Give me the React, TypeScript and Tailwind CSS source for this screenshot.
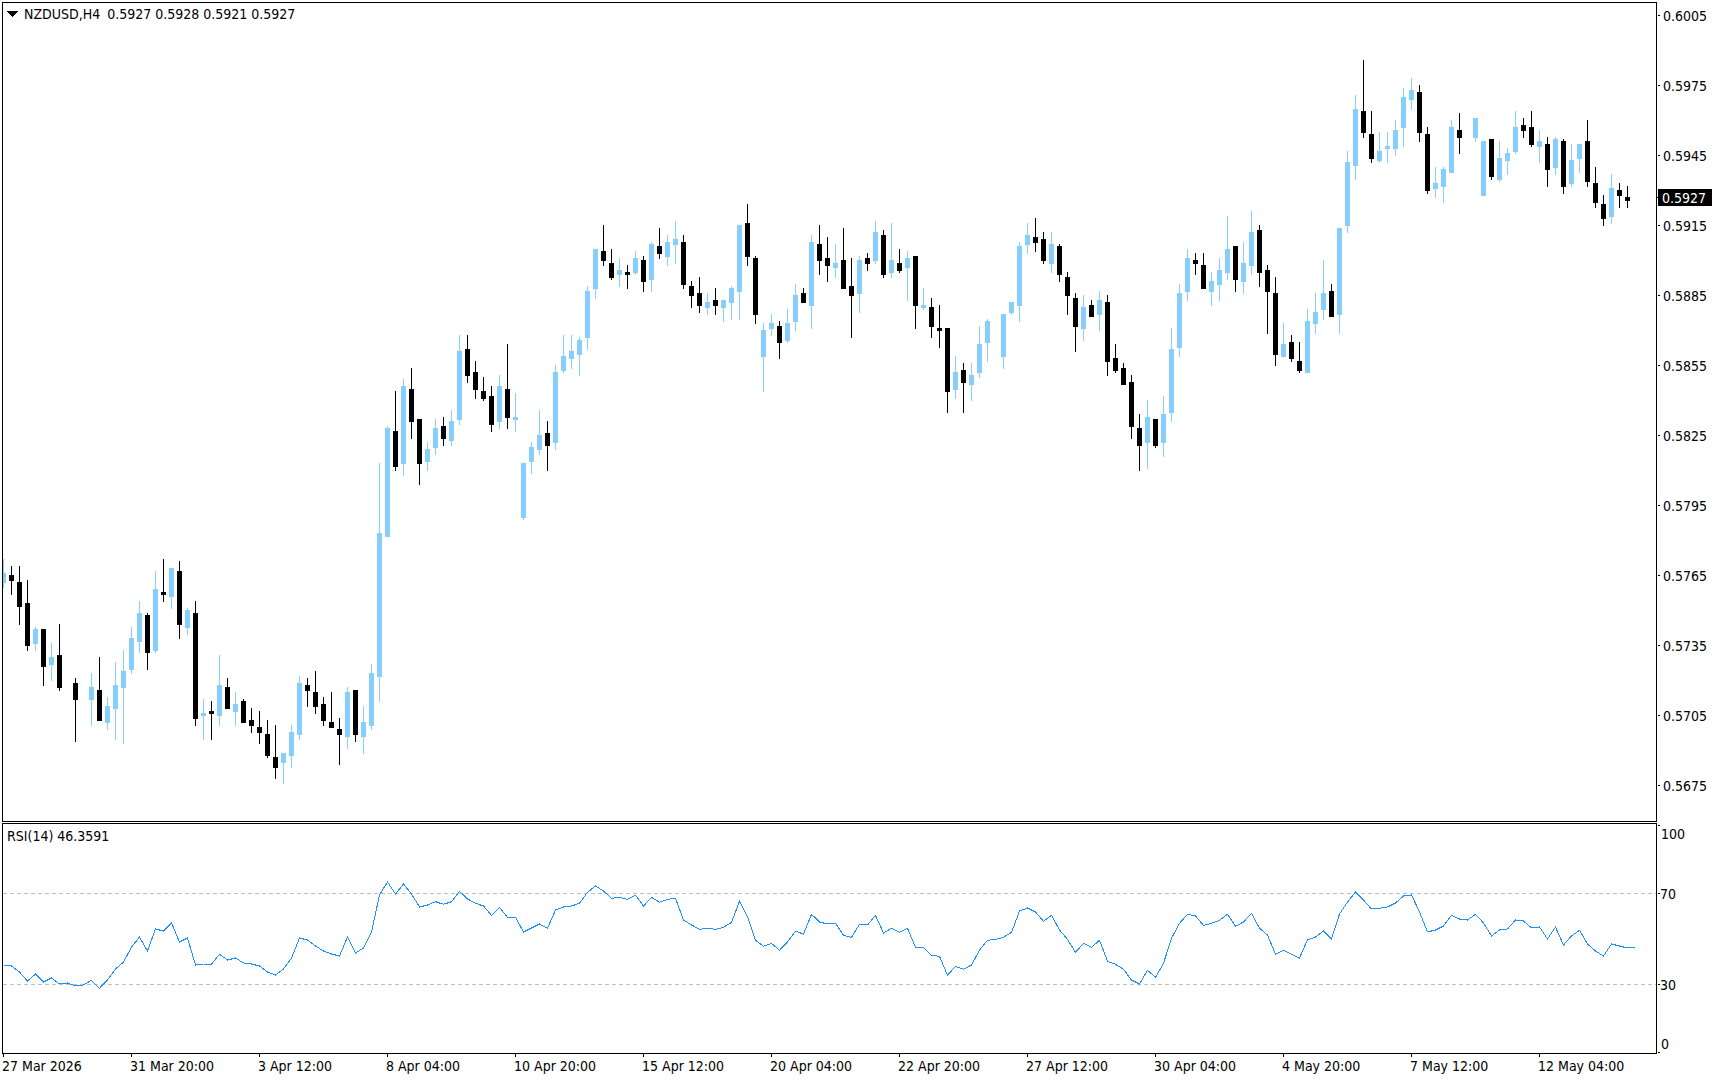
import React from "react";

// [index, bullish, wickTop, bodyTop, bodyBottom, wickBottom]
type C = [number, 0 | 1, number, number, number, number];
const candles: C[] = [
[0,1,559,573,583,588],[1,0,566,575,581,595],[2,0,566,582,607,625],[3,0,580,603,646,651],[4,1,627,629,644,651],[5,0,629,629,667,686],[6,1,643,657,665,681],[7,0,624,655,688,691],[9,0,678,683,700,742],[11,1,673,687,700,726],[12,0,657,690,721,721],[13,1,697,706,723,730],[14,1,662,685,709,740],[15,1,650,671,688,744],[16,1,627,638,670,674],[17,1,601,613,642,653],[18,0,613,615,653,670],[19,1,571,589,651,653],[20,0,559,592,595,602],[21,1,568,568,597,609],[22,0,561,571,625,639],[23,1,608,610,628,635],[24,0,601,613,719,726],[25,1,699,713,716,740],[26,0,701,711,714,740],[27,1,655,685,716,726],[28,0,678,687,709,709],[29,1,692,704,712,726],[30,0,699,701,723,723],[31,0,708,720,726,733],[32,0,711,727,733,744],[33,0,720,734,756,758],[34,0,725,757,768,779],[35,1,753,753,763,784],[36,1,725,732,756,768],[37,1,676,683,735,740],[38,0,678,685,691,707],[39,0,671,692,707,714],[40,0,697,704,721,726],[41,0,692,722,728,728],[42,0,718,729,735,765],[43,1,687,692,737,749],[44,0,690,690,735,742],[45,1,706,722,737,754],[46,1,664,673,726,730],[47,1,463,533,677,702],
[48,1,426,428,537,537],[49,0,391,431,467,471],[50,1,379,386,464,476],[51,0,368,389,422,439],[52,0,419,419,464,485],[53,1,442,449,462,471],[54,1,419,428,448,455],[55,0,417,426,439,446],[56,1,410,421,441,446],[57,1,335,351,420,425],[58,0,335,349,376,383],[59,0,361,372,390,399],[60,0,377,391,399,401],[61,0,386,396,425,432],[62,1,375,386,422,429],[63,0,344,389,418,429],[64,1,393,417,420,432],[65,1,463,463,518,520],[66,1,442,447,462,474],[67,1,410,435,450,455],[68,0,421,433,446,471],[69,1,365,372,443,450],[70,1,335,356,371,373],[71,1,335,351,359,369],[72,1,337,340,355,376],[73,1,286,291,338,350],[74,1,249,249,289,299],[75,0,225,251,261,266],[76,0,249,263,278,280],[77,1,258,270,275,287],[78,0,265,272,275,289],[79,1,251,258,273,275],[80,0,256,260,282,292],[81,1,242,244,280,292],[82,0,228,246,254,259],[83,1,235,242,257,266],[84,1,221,239,245,264],[85,0,235,242,285,289],[86,0,281,286,296,308],[87,0,277,293,306,313],[88,1,293,302,308,315],[89,0,288,300,306,315],[90,1,300,300,308,322],[91,1,286,288,303,320],[92,1,225,225,292,320],[93,0,204,223,257,266],[94,0,256,258,315,324],[95,1,323,330,357,392],[96,1,314,323,329,336],[97,0,321,326,343,359],[98,1,309,323,341,343],
[99,1,284,295,322,331],[100,0,288,293,303,303],[101,1,235,242,306,329],[102,0,225,244,261,275],[103,0,237,258,266,282],[104,1,244,263,268,278],[105,0,228,260,289,289],[106,0,258,286,296,338],[107,1,256,260,294,313],[108,0,253,258,264,271],[109,1,221,232,261,264],[110,0,230,235,275,278],[111,1,223,260,273,278],[112,0,249,263,271,273],[113,1,251,258,268,301],[114,0,256,256,306,329],[115,1,288,305,308,310],[116,0,298,307,327,338],[117,0,305,328,331,348],[118,0,328,328,392,413],[119,1,356,372,390,399],[120,0,363,370,383,413],[121,1,363,375,385,401],[122,1,326,344,373,378],[123,1,319,321,343,362],[125,1,314,314,357,369],[126,1,302,302,313,315],[127,1,242,246,306,322],[128,1,223,235,245,254],[129,0,218,237,243,252],[130,0,232,239,261,264],[131,1,232,244,264,273],[132,0,244,246,275,282],[133,0,272,277,296,315],[134,0,293,298,327,352],[135,1,295,307,329,341],[136,0,300,305,317,317],[137,1,291,300,315,331],[138,0,295,302,362,376],[139,0,344,358,371,373],[140,0,363,368,385,385],[141,0,375,382,427,439],[142,0,414,428,446,471],[143,1,400,417,443,469],[144,0,419,419,446,448],[145,1,396,414,443,457],[146,1,328,349,413,422],[147,1,284,293,348,357],[148,1,249,258,292,301],[149,0,253,260,264,275],[150,0,253,265,289,289],
[151,1,272,281,292,306],[152,1,258,270,285,301],[153,1,216,249,273,280],[154,0,246,246,280,292],[155,1,242,263,282,294],[156,1,211,232,266,275],[157,0,225,230,273,287],[158,0,265,270,292,334],[159,0,277,293,355,366],[160,1,323,344,357,357],[161,0,335,342,359,362],[162,0,342,361,371,373],[163,1,309,321,373,373],[164,1,293,312,324,334],[165,1,260,293,310,320],[166,0,284,291,317,317],[167,1,228,228,315,334],[168,1,151,162,226,233],[169,1,95,109,166,180],[170,0,60,111,133,138],[171,0,111,134,159,163],[172,1,132,151,161,163],[173,1,132,146,149,163],[174,1,120,130,149,156],[175,1,88,97,128,147],[176,1,78,90,100,110],[177,0,85,92,133,142],[178,0,127,134,191,194],[179,1,167,183,189,198],[180,1,167,169,187,203],[181,1,120,127,173,173],[182,0,113,130,138,154],[184,1,118,118,138,142],[185,1,141,141,196,196],[186,0,139,139,177,180],[187,1,141,158,180,182],[188,1,148,153,161,175],[189,1,111,127,152,154],[190,0,118,125,131,138],[191,0,111,127,145,147],[192,1,130,141,147,163],[193,0,137,144,170,187],[194,1,137,139,168,175],[195,0,139,141,187,194],[196,1,144,160,184,187],[197,1,144,144,159,173],[198,0,120,141,182,187],[199,0,167,183,203,208],[200,0,195,204,219,226],[201,1,174,188,217,224],[202,0,183,190,196,208],[203,0,186,197,201,208],
];

const rsiA = [465,468,486,513,492,516,504,522,519,528,525,511,535,510,477,456,411,381,423,357,363,339,396,384,465,462,462,433,450,444,459,462,468,486,495,477,444,384,390,408,423,432,438,381,429,414,366,255,216,252,222,252,291,285].map((v) => 810 + v / 3);
const rsiB = [95,103,95,64,87,100,108,136,112,142,142,186,174,162,175,120,111,108,100,67,48,63,85,82,88,76,108,82,97,88,85,150,165,178,175,178,172,157,94,140,211,229,220,241,216,184,192,133,156,162,160,196,202,163,165,136,189,175,187,175,232,232,256,259,316,289,298,285,240,211,208,202,187,123,114,126,154,136,180,208,247,220,232,211,274,283,298,330,342,301,322,280,205,160,133,138,166,160,151,133,169,156,130,175,195,253,241,253].map((v) => 870 + v / 3);
const rsiC = [444,390,381,363,387,312,276,246,270,297,295,291,279,258,255,306,366,360,348,316,327,330,313,339,378,360,357,330,333,354,351,387,351,405,378,361,402,423,438,402,408,414,411].map((v) => 810 + v / 3);
const rsiPoints = [...rsiA, ...rsiB, ...rsiC].map((y, i) => `${3.5 + 8 * i},${y.toFixed(1)}`).join(" ");

const prices = ["0.6005","0.5975","0.5945","0.5915","0.5885","0.5855","0.5825","0.5795","0.5765","0.5735","0.5705","0.5675"];
const times = ["27 Mar 2026","31 Mar 20:00","3 Apr 12:00","8 Apr 04:00","10 Apr 20:00","15 Apr 12:00","20 Apr 04:00","22 Apr 20:00","27 Apr 12:00","30 Apr 04:00","4 May 20:00","7 May 12:00","12 May 04:00"];

export default function App() {
  return (
    <div className="w-[1720px] h-[1080px] bg-white text-black text-[14px] leading-[17px] font-['DejaVu_Sans_Condensed','DejaVu_Sans',sans-serif] pl-[2px] pt-[2px] overflow-hidden">
      {/* main chart row */}
      <div className="flex h-[820px]">
        <div className="relative w-[1655px] h-full border border-black overflow-hidden">
          <svg width={1653} height={818} viewBox="3 3 1653 818" shapeRendering="crispEdges" className="block">
            {candles.map(([i, up, wt, bt, bb, wb]) => {
              const fill = up ? "#87cefa" : "#000000";
              return (
                <g key={i} fill={fill}>
                  <rect x={3 + 8 * i} y={wt} width={1} height={wb - wt} />
                  <rect x={1 + 8 * i} y={bt} width={5} height={bb - bt} />
                </g>
              );
            })}
          </svg>
          <div className="absolute left-[4px] top-[3px] flex items-center whitespace-pre">
            <svg width={11} height={7} viewBox="0 0 11 7" className="mr-[6px]" shapeRendering="crispEdges">
              <path d="M0 0H11L5.5 6.5Z" fill="#000" />
            </svg>
            <span>NZDUSD,H4</span>
            <span className="ml-[7px]">0.5927 0.5928 0.5921 0.5927</span>
          </div>
        </div>
        <div className="relative flex-1 pt-[5px] flex flex-col gap-[53px]">
          {prices.map((p) => (
            <div key={p} className="flex items-center h-[17px]">
              <div className="w-[2px] h-px bg-black ml-px" />
              <span className="ml-[3px] mt-[2px]">{p}</span>
            </div>
          ))}
          <div className="absolute left-px top-[187px] w-[54px] h-[17px] bg-black text-white pl-[4px] pt-px leading-[16px]">0.5927</div>
          <div className="absolute -left-px top-[195px] w-[2px] h-px bg-black" />
        </div>
      </div>

      {/* RSI row */}
      <div className="flex h-[231px] mt-px">
        <div className="relative w-[1655px] h-full border border-black overflow-hidden">
          <svg width={1653} height={229} viewBox="3 824 1653 229" shapeRendering="crispEdges" className="block">
            <line x1={3} x2={1656} y1={893.5} y2={893.5} stroke="#c0c0c0" strokeDasharray="4 3" />
            <line x1={3} x2={1656} y1={984.5} y2={984.5} stroke="#c0c0c0" strokeDasharray="4 3" />
            <polyline points={rsiPoints} fill="none" stroke="#1e90ff" strokeWidth={1} />
          </svg>
          <div className="absolute left-[4px] top-[4px]">RSI(14) 46.3591</div>
        </div>
        <div className="flex-1 flex flex-col pt-[2px]">
          <div className="flex items-start h-[17px]">
            <div className="w-[2px] h-px bg-black ml-px" />
            <span className="ml-px mt-px">100</span>
          </div>
          <div className="flex items-center h-[17px] mt-[43px]">
            <div className="w-[2px] h-px bg-black ml-px" />
            <span className="mt-[2px]">70</span>
          </div>
          <div className="flex items-center h-[17px] mt-[74px]">
            <div className="w-[2px] h-px bg-black ml-px" />
            <span className="mt-[2px]">30</span>
          </div>
          <div className="flex h-[17px] mt-[43px]">
            <div className="w-[2px] h-px bg-black ml-px mt-[16px]" />
            <span className="ml-px">0</span>
          </div>
        </div>
      </div>

      {/* time axis */}
      <div className="grid grid-cols-[repeat(13,128px)]">
        {times.map((t) => (
          <div key={t} className="flex flex-col">
            <div className="w-px h-[3px] bg-black ml-px" />
            <span className="whitespace-nowrap mt-px">{t}</span>
          </div>
        ))}
      </div>
    </div>
  );
}
